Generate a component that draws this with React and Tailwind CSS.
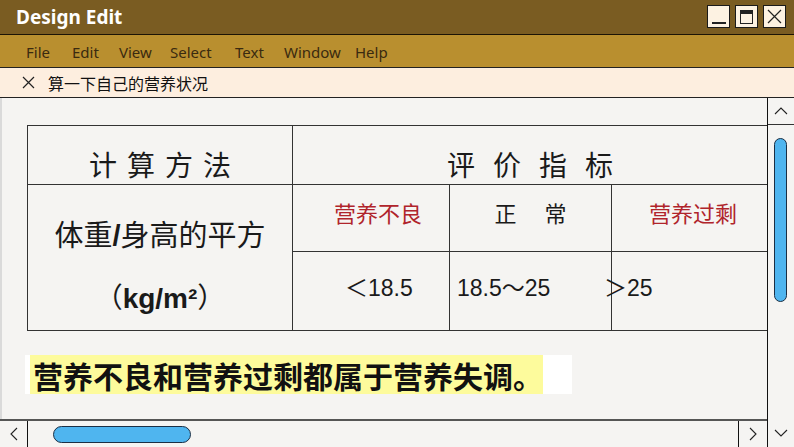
import React from 'react';

const menu = [
  { label: 'File', w: 'w-[46px]' },
  { label: 'Edit', w: 'w-[47px]' },
  { label: 'View', w: 'w-[51px]' },
  { label: 'Select', w: 'w-[65px]' },
  { label: 'Text', w: 'w-[49px]' },
  { label: 'Window', w: 'w-[71px]' },
  { label: 'Help', w: 'w-[40px]' },
];

const cjk = "font-['Noto_Sans_CJK_SC',sans-serif]";
const num = "font-['Liberation_Sans','Noto_Sans_CJK_SC',sans-serif]";

function Chevron({ dir }) {
  const pts = {
    up: '3,12 9,6 15,12',
    down: '3,6 9,12 15,6',
    left: '12,3 6,9 12,15',
    right: '6,3 12,9 6,15',
  }[dir];
  return (
    <svg width="18" height="18" viewBox="0 0 18 18">
      <polyline points={pts} fill="none" stroke="#222" strokeWidth="1.1" />
    </svg>
  );
}

function WinButton({ children }) {
  return (
    <div className="w-[23px] h-[23px] bg-[#fdf2e2] border border-[#1a1a1a] flex items-center justify-center">
      {children}
    </div>
  );
}

export default function App() {
  return (
    <div className="w-[794px] h-[447px] flex flex-col overflow-hidden bg-[#f5f4f2]">
      {/* Title bar */}
      <div className="h-[35px] shrink-0 bg-[#7a5c22] border-b border-[#1c1406] flex items-center pl-[16px] pr-[8px]">
        <span className="text-white font-bold text-[19px] font-['Noto_Sans',sans-serif] leading-none">
          Design Edit
        </span>
        <div className="ml-auto flex gap-[5px] pb-[1px]">
          <WinButton>
            <div className="w-[14px] h-[2px] bg-[#222] mt-[13px]" />
          </WinButton>
          <WinButton>
            <div className="w-[13px] h-[14px] border border-[#222] border-t-[4px]" />
          </WinButton>
          <WinButton>
            <svg width="17" height="17" viewBox="0 0 17 17">
              <path d="M2 2 L15 15 M15 2 L2 15" stroke="#222" strokeWidth="1.2" />
            </svg>
          </WinButton>
        </div>
      </div>

      {/* Menu bar */}
      <div className="h-[33px] shrink-0 bg-[#b98f2f] border-b border-[#222] flex items-center pl-[26px] pt-[2px] text-[15px] text-[#3a2a10] font-['Noto_Sans',sans-serif]">
        {menu.map((m) => (
          <span key={m.label} className={m.w}>
            {m.label}
          </span>
        ))}
      </div>

      {/* Tab */}
      <div className="h-[30px] shrink-0 bg-[#fdeedf] border-b border-[#222] flex items-center pl-[22px]">
        <svg width="13" height="13" viewBox="0 0 13 13">
          <path d="M1 1 L12 12 M12 1 L1 12" stroke="#222" strokeWidth="1.2" />
        </svg>
        <span className={`ml-[13px] text-[16px] text-[#111] leading-none ${cjk}`}>
          算一下自己的营养状况
        </span>
      </div>

      {/* Body */}
      <div className="flex-1 flex min-h-0">
        <div className="flex-1 flex flex-col min-w-0">
          <div className="flex-1 border-l-2 border-[#dadada] pl-[25px] pt-[27px]">
            {/* Table */}
            <div className="grid grid-cols-[265px_157px_162px_1fr] grid-rows-[59px_67px_78px] border-t border-l border-b border-[#333] text-[#1a1a1a]">
              <div className={`border-r border-b border-[#333] flex items-center justify-center pt-[18px] pl-[10px] text-[28px] tracking-[10px] leading-none ${cjk}`}>
                计算方法
              </div>
              <div className={`col-span-3 border-b border-[#333] flex items-center justify-center pt-[18px] pl-[18px] text-[28px] tracking-[18px] leading-none ${cjk}`}>
                评价指标
              </div>

              <div className="row-span-2 border-r border-[#333] flex flex-col items-center justify-center pt-[16px]">
                <div className={`leading-[60px] text-[29px] ${cjk}`}>
                  体重<span className={`font-bold ${num}`}>/</span>身高的平方
                </div>
                <div className={`leading-[60px] text-[28px] ${cjk}`}>
                  （<span className={`font-bold ${num}`}>kg/m²</span>）
                </div>
              </div>
              <div className={`border-r border-b border-[#333] flex items-center justify-center pb-[11px] pl-[14px] text-[22px] text-[#b0242b] ${cjk}`}>
                营养不良
              </div>
              <div className={`border-r border-b border-[#333] flex items-center justify-center pb-[11px] text-[22px] ${cjk}`}>
                <span>正</span>
                <span className="ml-[28px]">常</span>
              </div>
              <div className={`border-b border-[#333] flex items-center justify-center pb-[11px] pl-[7px] text-[22px] text-[#b0242b] ${cjk}`}>
                营养过剩
              </div>

              <div className={`border-r border-[#333] flex items-center pl-[52px] pb-[5px] text-[23px] ${num}`}>
                ＜18.5
              </div>
              <div className={`border-r border-[#333] flex items-center pl-[7px] pb-[5px] text-[23px] ${num}`}>
                18.5～25
              </div>
              <div className={`flex items-center pb-[5px] text-[23px] ${num}`}>
                <span className="-ml-[8px]">＞25</span>
              </div>
            </div>

            {/* Banner */}
            <div className="mt-[24px] -ml-[2px] flex w-[547px] bg-white">
              <div className={`ml-[5px] pl-[3px] bg-[#fdfb9c] h-[39px] flex items-center text-[30px] font-bold text-[#111] leading-none ${cjk}`}>
                营养不良和营养过剩都属于营养失调。
              </div>
            </div>
          </div>

          {/* Horizontal scrollbar */}
          <div className="h-[28px] shrink-0 border-t-2 border-[#555] flex items-stretch">
            <div className="w-[28px] border-r border-[#111] flex items-center justify-center">
              <Chevron dir="left" />
            </div>
            <div className="ml-[25px] mt-[5px] w-[138px] h-[17px] rounded-full bg-[#4fb5ef] border border-[#1b2f44]" />
            <div className="ml-auto w-[29px] border-l border-[#111] flex items-center justify-center">
              <Chevron dir="right" />
            </div>
          </div>
        </div>

        {/* Vertical scrollbar */}
        <div className="w-[27px] shrink-0 border-l border-[#111] flex flex-col items-center">
          <div className="w-full h-[27px] border-b border-[#333] flex items-center justify-center">
            <Chevron dir="up" />
          </div>
          <div className="mt-[13px] -ml-[1px] w-[13px] h-[164px] rounded-full bg-[#4fb5ef] border border-[#1b2f44]" />
          <div className="mt-auto w-full h-[28px] flex items-center justify-center">
            <Chevron dir="down" />
          </div>
        </div>
      </div>
    </div>
  );
}
